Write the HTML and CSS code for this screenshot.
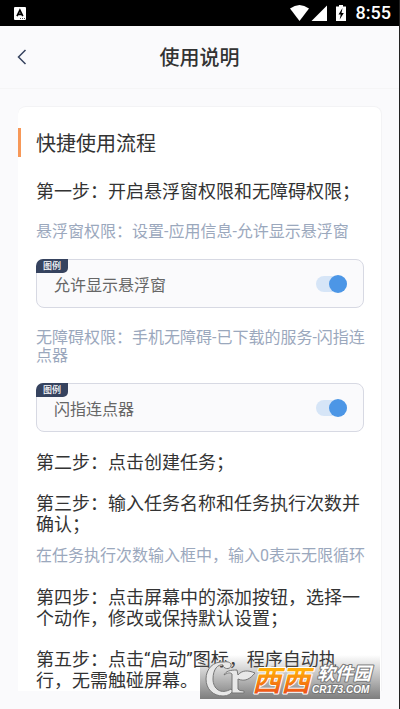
FILE: index.html
```html
<!DOCTYPE html>
<html lang="zh-CN">
<head>
<meta charset="utf-8">
<meta name="viewport" content="width=device-width, initial-scale=1">
<title>使用说明</title>
<link rel="stylesheet" href="styles.css">
</head>
<body>
<div class="status">
  <svg class="status-app" width="12" height="13" viewBox="0 0 12 13" aria-hidden="true"><rect width="12" height="13" rx="1" fill="#fff"/><path d="M3 9.2 5.9 3.2 8.8 9.2M4 7.4h3.8" fill="none" stroke="#000" stroke-width="1.7"/><path d="M6 11.5h1m1 0h1m1 0h1" stroke="#555"/></svg>
  <svg class="status-icons" width="58" height="18" viewBox="0 0 58 18" fill="#fff" aria-hidden="true">
    <path d="M0 4.5Q9.500-2.500 19 4.500L9.500 17Z"/>
    <path d="M37 1.500V17H21.500Z"/>
    <path d="M46 2.500h3V1h4v1.500h3V17H46Z"/>
    <path d="M52.500 4 48.500 10.500h2.200L49.700 15.500l4.100-6.500h-2.300Z" fill="#000"/>
  </svg>
  <time class="clock">8:55</time>
</div>
<header class="header">
  <button class="back" type="button" aria-label="返回"><svg width="10" height="16" viewBox="0 0 10 16" aria-hidden="true"><path d="M8.500 1 1.500 8l7 7" fill="none" stroke="#36435f" stroke-width="1.500"/></svg></button>
  <h1 class="title">使用说明</h1>
</header>
<main class="main">
  <section class="card">
    <h2 class="heading">快捷使用流程</h2>
    <p class="step">第一步：开启悬浮窗权限和无障碍权限；</p>
    <p class="note">悬浮窗权限：设置-应用信息-允许显示悬浮窗</p>
    <label class="sample"><span class="tag">图例</span><span>允许显示悬浮窗</span><input class="switch" type="checkbox" role="switch" checked></label>
    <p class="note">无障碍权限：手机无障碍-已下载的服务-闪指连点器</p>
    <label class="sample"><span class="tag">图例</span><span>闪指连点器</span><input class="switch" type="checkbox" role="switch" checked></label>
    <p class="step">第二步：点击创建任务；</p>
    <p class="step">第三步：输入任务名称和任务执行次数并确认；</p>
    <p class="note note-close">在任务执行次数输入框中，输入0表示无限循环</p>
    <p class="step">第四步：点击屏幕中的添加按钮，选择一个动作，修改或保持默认设置；</p>
    <p class="step">第五步：点击“启动”图标，程序自动执行，无需触碰屏幕。</p>
  </section>
</main>
<svg class="watermark" width="180" height="44" viewBox="0 0 180 44">
  <defs>
    <linearGradient id="shade" x1="0" y1="0" x2="0" y2="1"><stop offset="0" stop-color="#777" stop-opacity="0"/><stop offset="1" stop-color="#777" stop-opacity=".95"/></linearGradient>
    <linearGradient id="flame" x1="0" y1="0" x2="0" y2="1"><stop offset=".2" stop-color="#ffac08"/><stop offset="1" stop-color="#e9401c"/></linearGradient>
  </defs>
  <rect width="180" height="44" fill="url(#shade)"/>
  <g fill="#e8e8e8" stroke="#777" stroke-width="1" stroke-linejoin="round">
    <path d="M24 7C13 6 6 14 6 24C6 34 13 41 23 41C28 41 31 39 33 36L31 34C21 40 13 34 13 24C13 14 18 9 23 10C23 14 30 15 31 11C32 8 28 6 24 7Z"/>
    <path d="M24 20C26 16 30 15 37 15L38 20C42 15 48 15 55 18C50 24 45 27 38 24V34Q39 36 44 36V38H32V19C30 17 27 18 24 20Z"/>
  </g>
  <text class="wm-brand" x="52" y="36">西西</text>
  <text class="wm-name" x="117" y="25">软件园</text>
  <text class="wm-site" x="112" y="38">CR173.COM</text>
</svg>
</body>
</html>
```
FILE: styles.css
```css
* { box-sizing: border-box; }

body {
  display: flex;
  flex-direction: column;
  height: 100vh;
  margin: 0;
  overflow: hidden;
  position: relative;
  border-right: 1px solid #222;
  background: #fafafc;
  color: #333;
  font-family: Roboto, "Noto Sans CJK SC", sans-serif;
}

.status {
  display: flex;
  flex: none;
  align-items: center;
  height: 26px;
  padding: 0 8px 0 14px;
  background: #000;
  color: #fff;
}

.status-icons { margin-left: auto; }

.clock {
  margin-left: 8px;
  font: 500 18px/26px Roboto, sans-serif;
}

.header {
  display: grid;
  flex: none;
  grid-template-columns: 44px 1fr 44px;
  align-items: center;
  height: 63px;
  border-bottom: 1px solid #f5f5f6;
}

.back {
  display: flex;
  padding: 12px 17px;
  border: 0;
  background: none;
}

.title,
.heading {
  font-family: "Noto Sans CJK SC", sans-serif;
}

.title {
  margin: 0;
  font-size: 20px;
  font-weight: 500;
  line-height: 30px;
  text-align: center;
}

.main {
  flex: 1;
  min-height: 0;
  margin: 17px 17px 18px 18px;
  overflow: hidden;
}

.card {
  padding: 21px 12px 20px 0;
  border: 1px solid #f3f3f5;
  border-left: 0;
  border-radius: 8px;
  background: #fff;
}

.heading {
  margin: 0 0 24px;
  padding-left: 15px;
  border-left: 3px solid #f79858;
  font-size: 20px;
  font-weight: 400;
  line-height: 29px;
}

.step {
  margin: 0 0 20px 18px;
  font-size: 18px;
  line-height: 21px;
}

.note {
  margin: 0 0 0 18px;
  color: #9ba8bd;
  font-size: 16px;
  line-height: 18px;
}

.step:has(+ .note) { margin-bottom: 21px; }

.note + .sample { margin-top: 18px; }

.sample + .note { margin-top: 21px; }

.step:has(+ .note-close) { margin-bottom: 12px; }

.note-close { margin-bottom: 22px; }

.sample {
  display: flex;
  position: relative;
  align-items: center;
  justify-content: space-between;
  height: 49px;
  margin: 18px 5px 20px 18px;
  padding: 0 16px 0 17px;
  border: 1px solid #d7d9e3;
  border-radius: 8px;
  background: #fafafc;
  color: #666;
  font-size: 16px;
}

.tag {
  position: absolute;
  top: -1px;
  left: -1px;
  width: 32px;
  border-radius: 7px 0 5px 0;
  background: #36435f;
  color: #fff;
  font-size: 9px;
  font-weight: 500;
  line-height: 14px;
  text-align: center;
}

.switch {
  display: flex;
  align-items: center;
  justify-content: flex-end;
  width: 31px;
  height: 16px;
  margin: 0;
  appearance: none;
  border-radius: 8px;
  background: #d6e5f7;
}

.switch::before {
  flex: none;
  width: 18px;
  height: 18px;
  border-radius: 50%;
  background: #4c96e6;
  content: "";
}

.watermark {
  position: absolute;
  right: 19px;
  bottom: 10px;
}

.watermark text {
  font-style: italic;
  font-weight: 700;
  paint-order: stroke;
  stroke-linejoin: round;
}

.wm-brand {
  fill: url(#flame);
  font-size: 29px;
  stroke: #fff;
  stroke-width: 2px;
}

.wm-name {
  fill: #fff;
  font-size: 18px;
  stroke: #777;
  stroke-width: 2px;
}

.wm-site {
  fill: #fff;
  font-family: "Liberation Sans", sans-serif;
  font-size: 10px;
  stroke: #777;
  stroke-width: 2px;
}
```
